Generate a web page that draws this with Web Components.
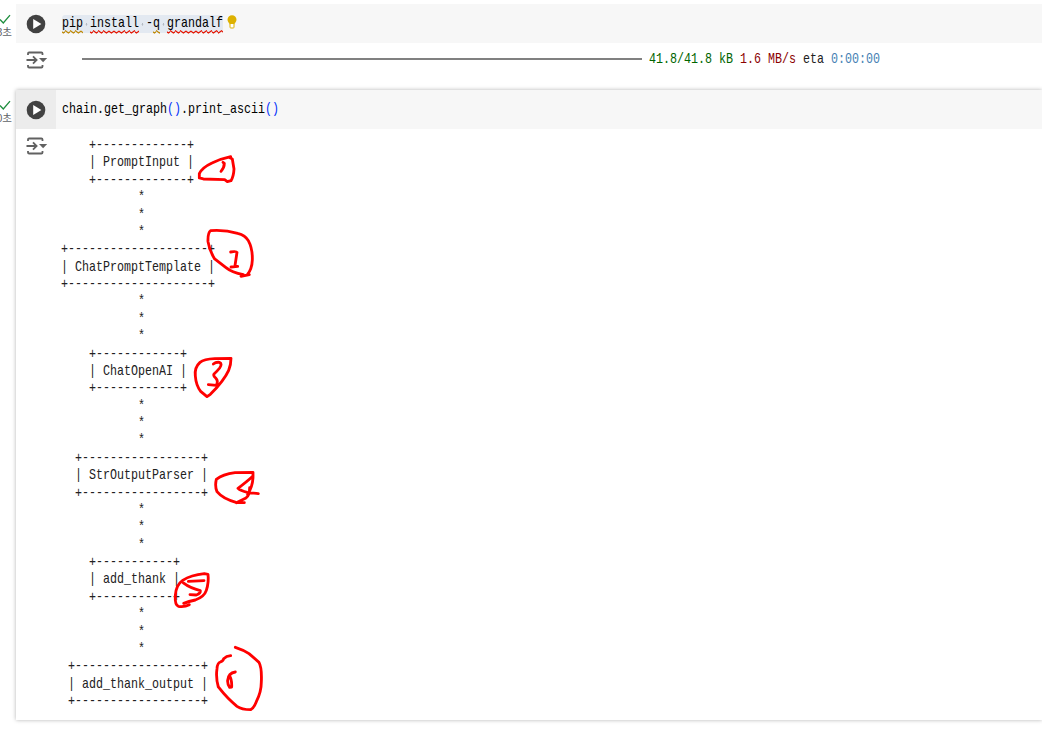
<!DOCTYPE html>
<html lang="ko">
<head>
<meta charset="utf-8">
<title>Notebook</title>
<style>
body {
  margin: 0;
  height: 730px;
  overflow: hidden;
  background: #fff;
}
</style>
</head>
<body>
<note-book>
  <code-cell seconds="3" class="first">
    <code-text slot="code" marked><code-word kind="warn">pip</code-word><code-space></code-space><code-word kind="error">install</code-word><code-space></code-space>-<code-word kind="warn">q</code-word><code-space></code-space><code-word kind="error">grandalf</code-word></code-text>
    <hint-bulb slot="code"></hint-bulb>
    <progress-line></progress-line>
  </code-cell>
  <code-cell seconds="0" focused>
    <code-text slot="code">chain.get_graph<span style="color:#0431fa">()</span>.print_ascii<span style="color:#0431fa">()</span></code-text>
    <ascii-graph></ascii-graph>
  </code-cell>
  <ink-notes slot="ink"></ink-notes>
</note-book>

<script>
function define(name, html, setup) {
  const template = document.createElement('template');
  // line breaks between tags would show up inside pre-formatted text
  template.innerHTML = html.trim().replace(/>\n\s*</g, '><');
  customElements.define(name, class extends HTMLElement {
    constructor() {
      super();
      this.attachShadow({ mode: 'open' });
      this.shadowRoot.appendChild(template.content.cloneNode(true));
    }

    connectedCallback() {
      if (setup) setup(this, this.shadowRoot);
    }
  });
}

define('note-book', `
<style>
:host {
  display: block;
  position: relative;
  height: 726px;
  padding-top: 4px;
  overflow: hidden;
}
.cells {
  display: flex;
  flex-direction: column;
  gap: 14px;
}
</style>
<div class="cells"><slot></slot></div>
<slot name="ink"></slot>
`);

define('code-cell', `
<style>
:host {
  display: grid;
  grid-template-columns: 16px 1fr;
  height: 72px;
}
:host([focused]) { height: 630px; }
.status {
  display: flex;
  flex-direction: column;
  align-items: flex-end;
  padding: 10px 4px 0 0;
  overflow: hidden;
}
.status svg { display: block; margin-right: 1px; }
.time {
  font: 10.5px/12px "Liberation Sans", "Noto Sans CJK KR", sans-serif;
  color: #5f6368;
  white-space: nowrap;
  margin-top: 1px;
}
:host([focused]) .frame { box-shadow: 0 0 4px rgba(0, 0, 0, .3); }
.head {
  display: flex;
  height: 39px;
  background: #f7f7f7;
}
.run {
  display: flex;
  align-items: center;
  justify-content: center;
  width: 40px;
}
:host([focused]) .run { background: #ececec; }
.code {
  display: flex;
  align-items: flex-start;
  padding: 11px 0 0 6px;
}
.output { display: flex; }
.toggle {
  width: 46px;
  padding: 8px 0 0 10px;
  box-sizing: border-box;
}
.toggle svg { display: block; }
</style>
<div class="status">
  <svg width="12" height="11" viewBox="0 0 12 11"><path d="M1 5.5 4.3 9 11 1.2" fill="none" stroke="#1e8e3e" stroke-width="1.3"/></svg>
  <div class="time"></div>
</div>
<div class="frame">
  <div class="head">
    <div class="run">
      <svg width="20" height="20" viewBox="0 0 20 20"><circle cx="10" cy="10" r="9.3" fill="#424242"/><path d="M7.2 5v10l8.200-5z" fill="#fff"/></svg>
    </div>
    <div class="code"><slot name="code"></slot></div>
  </div>
  <div class="output">
    <div class="toggle">
      <svg width="22" height="18" viewBox="0 0 22 18" fill="none" stroke="#616161" stroke-width="1.8">
        <path d="M2 4V2.6Q2 1.5 3.1 1.5H15.4Q16.5 1.5 16.5 2.6V4M2 14V15.400Q2 16.500 3.100 16.500H15.400Q16.500 16.500 16.500 15.400V14M0.500 9H10M7 5.400 10.600 9 7 12.600"/>
        <path d="M13 7h8.200l-4.100 4.200z" fill="#616161" stroke="none"/>
      </svg>
    </div>
    <slot></slot>
  </div>
</div>
`, (el, root) => {
  root.querySelector('.time').textContent = `${el.getAttribute('seconds')}초`;
});

// 15px mono squeezed so that every column is 7px wide
define('code-text', `
<style>
:host {
  display: block;
  width: max-content;
  font: 15px/18px "Liberation Mono", monospace;
  color: #000;
  white-space: pre;
  transform: scaleX(.7776);
  transform-origin: 0 0;
}
:host([marked]) {
  background: #e3e9f1;
  border-radius: 4px;
  margin-right: -45px;
}
</style>
<slot></slot>
`);

define('code-word', `
<style>
:host {
  display: inline-block;
  height: 20px;
  margin-bottom: -2px;
  background: url("data:image/svg+xml,%3Csvg xmlns='http://www.w3.org/2000/svg' width='6.5' height='4' viewBox='0 0 6.5 4'%3E%3Cpath d='M-1.600 .8 1.600 3 4.900 .8 8.100 3' fill='none' stroke='%23e51400' stroke-width='1.200'/%3E%3C/svg%3E") 0 15px repeat-x;
}
:host([kind=warn]) {
  background-image: url("data:image/svg+xml,%3Csvg xmlns='http://www.w3.org/2000/svg' width='6.5' height='4' viewBox='0 0 6.5 4'%3E%3Cpath d='M-1.600 .8 1.600 3 4.900 .8 8.100 3' fill='none' stroke='%23bf8803' stroke-width='1.200'/%3E%3C/svg%3E");
}
</style>
<slot></slot>
`);

define('code-space', `
<style>
span { background: radial-gradient(circle at 50% 55%, #b4bac3 1px, transparent 1.4px); }
</style>
<span> </span>
`);

define('hint-bulb', `
<style>
:host { display: block; margin: 0 0 0 3px; }
svg { display: block; }
</style>
<svg width="10" height="14" viewBox="0 0 10 14">
  <path d="M5 .2a4.500 4.500 0 0 1 4.500 4.500C9.500 6.800 7.800 7.600 7.400 9.200H2.600C2.200 7.600.5 6.800.5 4.700A4.500 4.500 0 0 1 5 .2z" fill="#ddb100"/>
  <path d="M3 9v3.200q0 .8.8.8h2.400q.8 0 .8-.8V9" fill="#fff" stroke="#ddb100"/>
</svg>
`);

define('progress-line', `
<style>
:host {
  display: flex;
  align-items: center;
  gap: 7px;
  height: 33px;
  padding-left: 20px;
}
.bar { width: 560px; height: 2px; margin-bottom: 2px; background: #808080; }
.size { color: #006400; }
.speed { color: #8b0000; }
.text { color: #212121; }
.eta { color: #4682b4; }
</style>
<div class="bar"></div>
<code-text><span class="size">41.8/41.8 kB</span> <span class="speed">1.6 MB/s</span><span class="text"> eta </span><span class="eta">0:00:00</span></code-text>
`);

define('ascii-graph', `
<style>
:host { display: block; padding-top: 8px; margin-left: -1px; }
code-text { line-height: 17.375px; color: #212121; }
</style>
<code-text></code-text>
`, (el, root) => {
  const nodes = [
    [4, 'PromptInput'],
    [0, 'ChatPromptTemplate'],
    [4, 'ChatOpenAI'],
    [2, 'StrOutputParser'],
    [4, 'add_thank'],
    [1, 'add_thank_output'],
  ];
  const link = Array(3).fill(' '.repeat(11) + '*').join('\n');
  root.querySelector('code-text').textContent = nodes.map(([col, name]) => {
    const pad = ' '.repeat(col);
    const edge = `${pad}+${'-'.repeat(name.length + 2)}+`;
    return `${edge}\n${pad}| ${name} |\n${edge}`;
  }).join(`\n${link}\n`);
});

// pen strokes, each group drawn at three times its size
define('ink-notes', `
<style>
:host {
  position: absolute;
  inset: 0;
  pointer-events: none;
}
svg { display: block; }
g { fill: none; stroke: #f00; stroke-width: 8.5; stroke-linecap: round; stroke-linejoin: round; }
</style>
<svg width="1042" height="726" viewBox="0 0 1042 726">
  <g transform="translate(190 145) scale(.3333)">
    <path d="M122 35Q90 42 66 54Q36 68 28 86L28 99L40 102L104 104L112 110L123 107Q131 94 132 72L127 42L117 37M99 52L103 55Q103 68 93 79"/>
    <path d="M178 389L153 394M160 389Q125 382 108 368L74 342Q58 316 54 290Q53 263 62 257Q105 254 143 265Q166 271 175 287Q188 311 187 345Q186 372 172 389M122 321Q139 318 141 322L135 362M123 366L143 364"/>
  </g>
  <g transform="translate(180 345) scale(.3333)">
    <path d="M153 40L104 41Q72 42 60 52Q43 67 46 93Q48 121 62 139L81 155L91 148Q132 107 146 76Q153 60 153 40M100 57Q107 51 118 52Q128 56 119 69Q112 78 102 87Q99 92 107 99Q116 108 109 121L85 119"/>
    <path d="M219 398V382L165 383Q128 388 109 403Q104 424 111 440Q128 461 168 472L193 473M219 393Q203 408 174 430Q182 438 202 442L235 446M209 428Q209 450 198 459L169 473M219 399Q217 427 203 448"/>
  </g>
  <g transform="translate(160 560) scale(.3333)">
    <path d="M88 134Q73 142 55 139Q44 134 46 106Q48 75 68 61Q93 45 133 41L144 43Q147 66 139 91Q133 110 106 120Q86 124 71 130M132 62L85 64M70 69Q91 85 121 92Q122 101 109 105L90 104"/>
    <path d="M226 262Q251 270 267 281L297 307Q306 323 304 366Q304 396 289 425Q281 445 272 449Q245 449 231 439Q203 417 175 381Q167 354 171 326Q172 309 181 306Q190 302 191 296Q199 288 212 287M226 336Q205 339 203 361Q202 372 209 382L215 381Q216 358 208 347"/>
  </g>
</svg>
`);
</script>
</body>
</html>
